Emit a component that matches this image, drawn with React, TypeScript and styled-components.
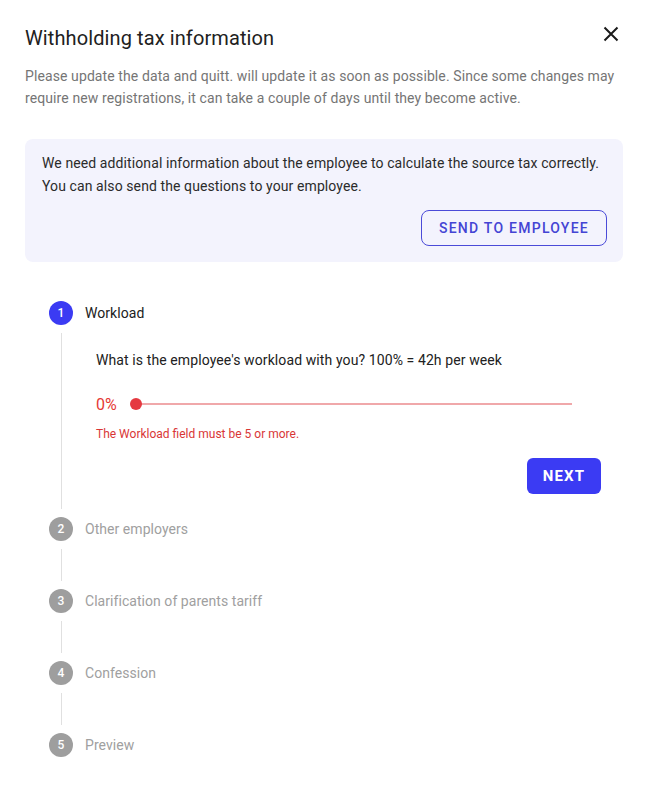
import React from "react";
import styled, { createGlobalStyle } from "styled-components";

const Global = createGlobalStyle`
  html, body { margin: 0; padding: 0; background: #ffffff; }
  body { font-family: Roboto, "Noto Sans", Arial, sans-serif; -webkit-font-smoothing: antialiased; }
  * { box-sizing: border-box; }
`;

const Dialog = styled.div`
  width: 645px;
  padding: 22px 22px 20px 25px;
  background: #fff;
`;

const Header = styled.div`
  display: flex;
  align-items: center;
  justify-content: space-between;
  height: 32px;
`;

const Title = styled.h1`
  margin: 0;
  font-size: 20px;
  line-height: 32px;
  font-weight: 400;
  color: #212121;
  letter-spacing: 0.1px;
`;

const CloseButton = styled.button`
  width: 24px;
  height: 24px;
  margin-top: -8px;
  margin-right: 0;
  padding: 0;
  border: 0;
  background: transparent;
  display: flex;
  align-items: center;
  justify-content: center;
  cursor: pointer;
`;

const Description = styled.p`
  margin: 11px 0 0;
  font-size: 14px;
  line-height: 22px;
  color: #757575;
  letter-spacing: 0.1px;
`;

const Alert = styled.div`
  margin-top: 30px;
  background: #f3f3fd;
  border-radius: 8px;
  padding: 13px 16px 16px 17px;
  display: flex;
  flex-direction: column;
`;

const AlertText = styled.p`
  margin: 0;
  font-size: 14px;
  line-height: 23px;
  color: #2b2b2b;
  letter-spacing: 0.1px;
`;

const OutlineButton = styled.button`
  align-self: flex-end;
  margin-top: 12px;
  height: 36px;
  padding: 0 17px;
  border: 1px solid #4b4bd8;
  border-radius: 8px;
  background: transparent;
  color: #4444d4;
  font-family: Roboto, Arial, sans-serif;
  font-size: 14px;
  font-weight: 500;
  letter-spacing: 1.25px;
  cursor: pointer;
`;

const Stepper = styled.div`
  margin-top: 39px;
  padding-left: 24px;
  display: flex;
  flex-direction: column;
`;

const StepHeader = styled.div`
  display: flex;
  align-items: center;
  height: 24px;
  gap: 12px;
`;

const StepCircle = styled.div<{ $active?: boolean }>`
  width: 24px;
  height: 24px;
  border-radius: 50%;
  background: ${(p) => (p.$active ? "#3b3bf3" : "#9e9e9e")};
  color: #fff;
  font-size: 12px;
  font-weight: 500;
  display: flex;
  align-items: center;
  justify-content: center;
`;

const StepLabel = styled.span<{ $active?: boolean }>`
  font-size: 14px;
  line-height: 20px;
  color: ${(p) => (p.$active ? "#212121" : "#a0a0a0")};
  letter-spacing: 0.05px;
`;

const StepBody = styled.div`
  margin: 8px 0 8px 12px;
  border-left: 1px solid #e0e0e0;
  min-height: 32px;
`;

const StepContent = styled.div`
  padding: 17px 22px 15px 34px;
  display: flex;
  flex-direction: column;
`;

const Question = styled.p`
  margin: 0;
  font-size: 14px;
  line-height: 20px;
  color: #212121;
  letter-spacing: 0.1px;
`;

const SliderRow = styled.div`
  margin-top: 18px;
  height: 32px;
  display: flex;
  align-items: center;
  padding-right: 29px;
`;

const SliderValue = styled.span`
  font-size: 16px;
  color: #e53935;
  width: 34px;
`;

const SliderTrack = styled.div`
  position: relative;
  flex: 1;
  height: 2px;
  background: #f0a8aa;
  margin-left: 6px;
`;

const SliderThumb = styled.div`
  position: absolute;
  left: -6px;
  top: -5px;
  width: 12px;
  height: 12px;
  border-radius: 50%;
  background: #e53940;
`;

const ErrorText = styled.p`
  margin: 6px 0 0;
  font-size: 12px;
  line-height: 16px;
  color: #d93636;
`;

const PrimaryButton = styled.button`
  align-self: flex-end;
  margin-top: 16px;
  height: 36px;
  width: 74px;
  border: 0;
  border-radius: 6px;
  background: #3b3bf3;
  color: #fff;
  font-family: Roboto, Arial, sans-serif;
  font-size: 15px;
  font-weight: 700;
  letter-spacing: 1.2px;
  cursor: pointer;
`;

const steps = ["Workload", "Other employers", "Clarification of parents tariff", "Confession", "Preview"];

export default function App() {
  return (
    <>
      <Global />
      <Dialog>
        <Header>
          <Title>Withholding tax information</Title>
          <CloseButton aria-label="Close">
            <svg width="24" height="24" viewBox="0 0 24 24">
              <path d="M5.5 5.5 L18.5 18.5 M18.5 5.5 L5.5 18.5" stroke="#1a1a1a" strokeWidth="2" fill="none" />
            </svg>
          </CloseButton>
        </Header>
        <Description>
          Please update the data and quitt. will update it as soon as possible. Since some changes may
          require new registrations, it can take a couple of days until they become active.
        </Description>
        <Alert>
          <AlertText>
            We need additional information about the employee to calculate the source tax correctly.
            <br />
            You can also send the questions to your employee.
          </AlertText>
          <OutlineButton>SEND TO EMPLOYEE</OutlineButton>
        </Alert>
        <Stepper>
          {steps.map((s, i) => {
            const active = i === 0;
            const last = i === steps.length - 1;
            return (
              <div key={s}>
                <StepHeader>
                  <StepCircle $active={active}>{i + 1}</StepCircle>
                  <StepLabel $active={active}>{s}</StepLabel>
                </StepHeader>
                {!last && (
                  <StepBody>
                    {active && (
                      <StepContent>
                        <Question>What is the employee's workload with you? 100% = 42h per week</Question>
                        <SliderRow>
                          <SliderValue>0%</SliderValue>
                          <SliderTrack>
                            <SliderThumb />
                          </SliderTrack>
                        </SliderRow>
                        <ErrorText>The Workload field must be 5 or more.</ErrorText>
                        <PrimaryButton>NEXT</PrimaryButton>
                      </StepContent>
                    )}
                  </StepBody>
                )}
              </div>
            );
          })}
        </Stepper>
      </Dialog>
    </>
  );
}
